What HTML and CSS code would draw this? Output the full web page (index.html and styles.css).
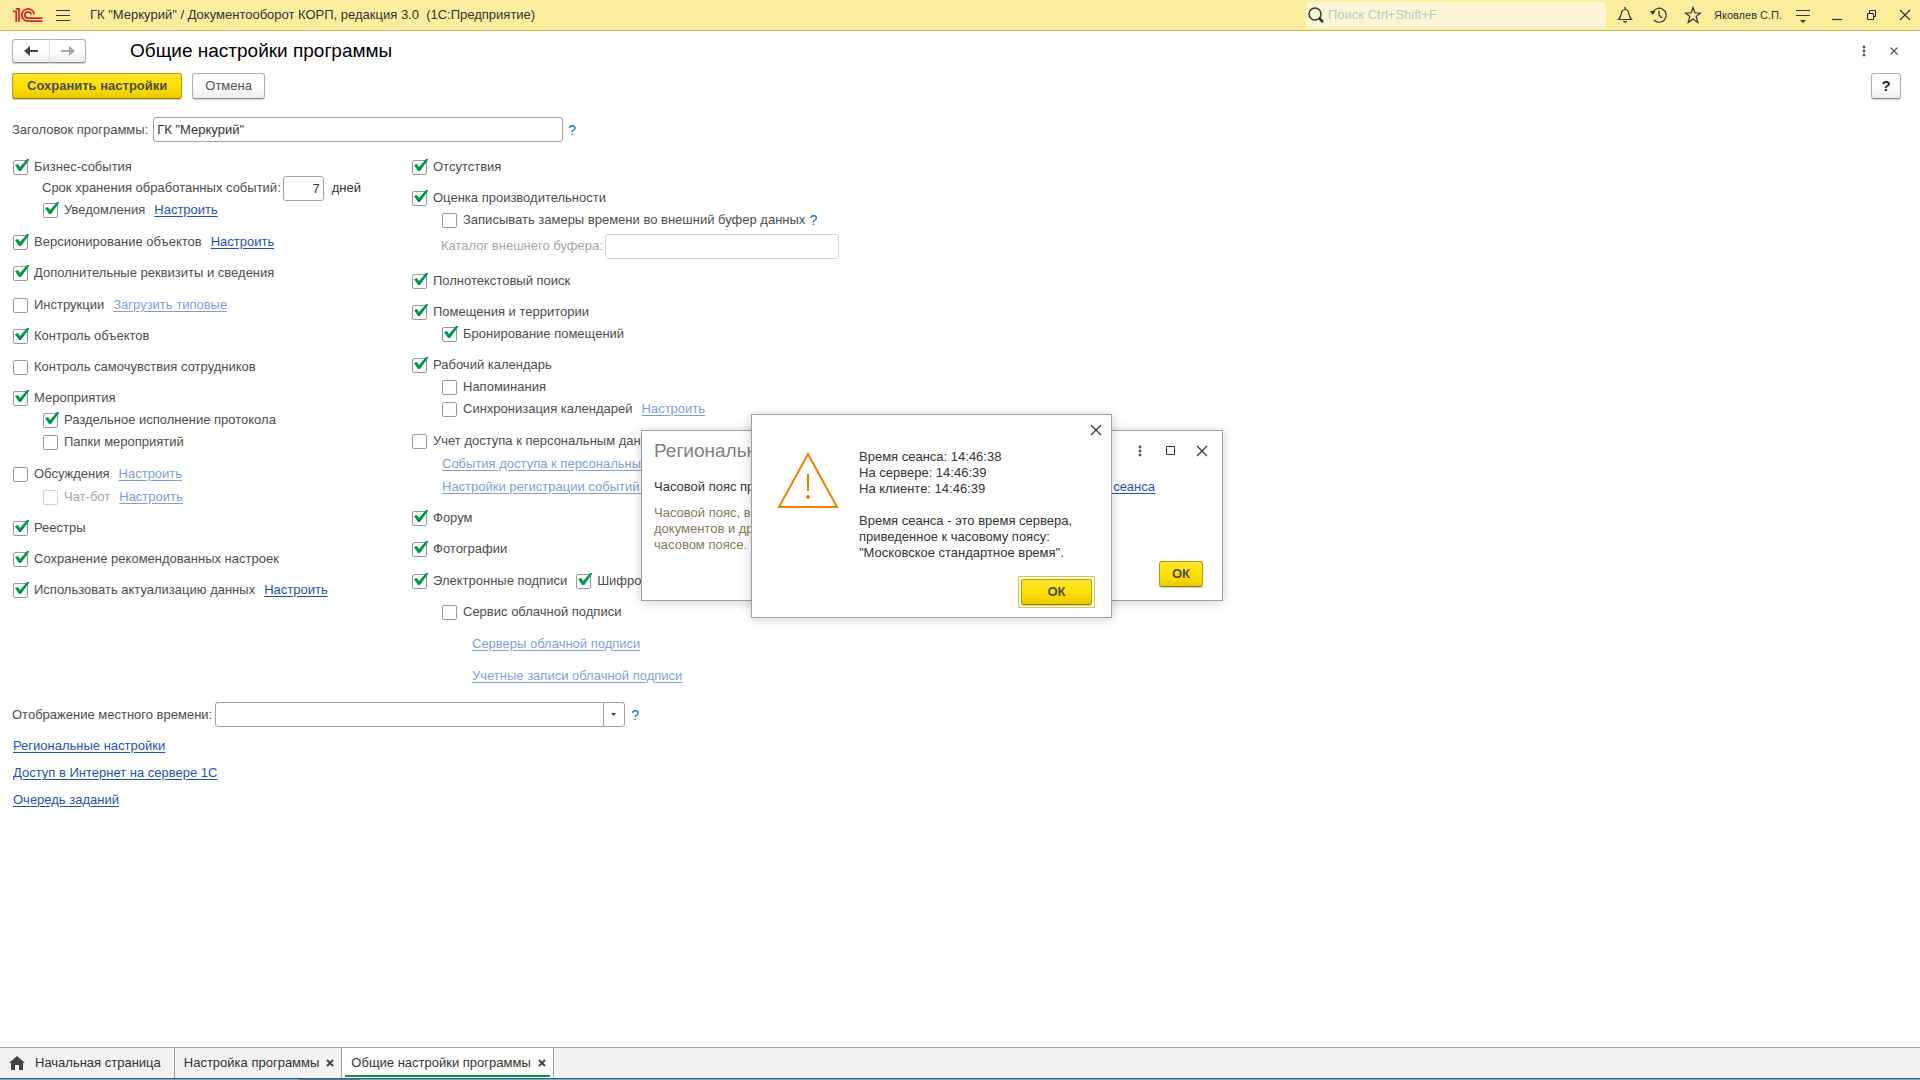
FILE: index.html
```html
<!DOCTYPE html>
<html lang="ru">
<head>
<meta charset="utf-8">
<title>Общие настройки программы</title>
<link rel="stylesheet" href="styles.css">
</head>
<body>
<header class="topbar">
  <svg class="logo" viewBox="0 0 30 18" width="30" height="18" fill="none" stroke="#d6232a" stroke-width="1.700"><path d="M0 5.300h3.200V16M2.800 2.800H6V16"/><path d="M21.200 8.500A6.200 6.200 0 1 0 15 15.200h14.500"/><path d="M18.200 8.500A3.200 3.200 0 1 0 15 12.200h14.500"/></svg>
  <button class="icon-btn menu-btn" aria-label="Меню"><svg width="16" height="14" viewBox="0 0 16 14" stroke="#333" fill="none"><path d="M1 2.500h14M1 7.500h14M1 12.500h14"/></svg></button>
  <span class="app-title">ГК "Меркурий" / Документооборот КОРП, редакция 3.0&nbsp; (1С:Предприятие)</span>
  <label class="search"><svg width="18" height="18" viewBox="0 0 18 18" fill="none" stroke="#333"><circle cx="8" cy="8" r="6" stroke-width="1.400"/><path d="M12 12l4 4" stroke-width="2.500"/></svg><input type="search" aria-label="Поиск" placeholder="Поиск Ctrl+Shift+F"></label>
  <nav class="tools">
    <button class="icon-btn" aria-label="Уведомления"><svg width="18" height="18" viewBox="0 0 18 18" fill="none" stroke="#333" stroke-width="1.200"><path d="M2.500 13.500c2-2 2.500-3.500 3-7 .3-2 1.500-3 3.500-3s3.200 1 3.500 3c.5 3.500 1 5 3 7zM9 3.500V1"/><path d="M6.500 15h5L9 17z" fill="#333" stroke="none"/></svg></button>
    <button class="icon-btn" aria-label="История"><svg width="18" height="18" viewBox="0 0 18 18" fill="none" stroke="#333" stroke-width="1.200"><path d="M2.500 7A7 7 0 1 1 4 14M9 4.500V9l3 3"/><path d="M0 5h5.500L2.500 9z" fill="#333" stroke="none"/></svg></button>
    <button class="icon-btn" aria-label="Избранное"><svg width="18" height="18" viewBox="0 0 18 18" fill="none" stroke="#333" stroke-width="1.200"><path d="M9 1.500l2 5.500h5.500l-4.300 3.500 1.600 6L9 13l-4.800 3.500 1.600-6L1.500 7H7z"/></svg></button>
    <a class="user" href="#">Яковлев С.П.</a>
    <button class="icon-btn" aria-label="Настройки"><svg width="18" height="18" viewBox="0 0 18 18" stroke="#333" fill="none"><path d="M2 4.500h14M2 9.500h14" stroke-width="1.200"/><path d="M6 14h6l-3 3z" fill="#333" stroke="none"/></svg></button>
    <button class="icon-btn" aria-label="Свернуть"><svg width="18" height="18" viewBox="0 0 18 18" stroke="#333" fill="none"><path d="M4 13.500h10" stroke-width="1.200"/></svg></button>
    <button class="icon-btn" aria-label="Восстановить"><svg width="18" height="18" viewBox="0 0 18 18" stroke="#222" fill="none"><path d="M5.500 7.500h6v6h-6zM7.500 7.500v-3h6v6h-2"/></svg></button>
    <button class="icon-btn" aria-label="Закрыть"><svg width="18" height="18" viewBox="0 0 18 18" stroke="#333" fill="none" stroke-width="1.200"><path d="M4 4l10 10M14 4L4 14"/></svg></button>
  </nav>
</header>

<main class="page">
  <div class="heading">
    <div class="history"><button aria-label="Назад"><svg width="16" height="12" viewBox="0 0 16 12"><path d="M1 6l6-5v4h8v2H7v4z" fill="#444"/></svg></button><button aria-label="Вперед"><svg width="16" height="12" viewBox="0 0 16 12"><path d="M15 6L9 1v4H1v2h8v4z" fill="#a5a5a5"/></svg></button></div>
    <h1>Общие настройки программы</h1>
    <button class="icon-btn" aria-label="Еще"><svg width="18" height="18" viewBox="0 0 18 18" fill="#555"><circle cx="9" cy="5" r="1.400"/><circle cx="9" cy="9" r="1.400"/><circle cx="9" cy="13" r="1.400"/></svg></button>
    <button class="icon-btn" aria-label="Закрыть форму"><svg width="18" height="18" viewBox="0 0 18 18" stroke="#555" fill="none" stroke-width="1.200"><path d="M5.500 5.500l7 7M12.500 5.500l-7 7"/></svg></button>
  </div>
  <div class="commands">
    <button class="btn primary">Сохранить настройки</button>
    <button class="btn">Отмена</button>
    <button class="btn help-btn">?</button>
  </div>
  <div class="field title-field">
    <label for="title">Заголовок программы:</label>
    <input class="text" id="title" type="text" value='ГК "Меркурий"'>
    <a class="hint" href="#">?</a>
  </div>

  <div class="columns">
    <div class="column">
      <section class="group">
        <div class="row"><label class="check"><input type="checkbox" checked>Бизнес-события</label></div>
        <div class="row term"><label for="term">Срок хранения обработанных событий:</label><input class="text days" id="term" type="text" value="7"><span class="unit">дней</span></div>
        <div class="row sub spaced"><label class="check"><input type="checkbox" checked>Уведомления</label><a href="#">Настроить</a></div>
      </section>
      <section class="group spaced"><div class="row"><label class="check"><input type="checkbox" checked>Версионирование объектов</label><a href="#">Настроить</a></div></section>
      <section class="group"><div class="row"><label class="check"><input type="checkbox" checked>Дополнительные реквизиты и сведения</label></div></section>
      <section class="group spaced"><div class="row"><label class="check"><input type="checkbox">Инструкции</label><a class="off" href="#">Загрузить типовые</a></div></section>
      <section class="group"><div class="row"><label class="check"><input type="checkbox" checked>Контроль объектов</label></div></section>
      <section class="group"><div class="row"><label class="check"><input type="checkbox">Контроль самочувствия сотрудников</label></div></section>
      <section class="group">
        <div class="row"><label class="check"><input type="checkbox" checked>Мероприятия</label></div>
        <div class="row sub"><label class="check"><input type="checkbox" checked>Раздельное исполнение протокола</label></div>
        <div class="row sub"><label class="check"><input type="checkbox">Папки мероприятий</label></div>
      </section>
      <section class="group spaced">
        <div class="row"><label class="check"><input type="checkbox">Обсуждения</label><a class="off" href="#">Настроить</a></div>
        <div class="row sub spaced"><label class="check muted"><input type="checkbox" disabled>Чат-бот</label><a class="off" href="#">Настроить</a></div>
      </section>
      <section class="group"><div class="row"><label class="check"><input type="checkbox" checked>Реестры</label></div></section>
      <section class="group"><div class="row"><label class="check"><input type="checkbox" checked>Сохранение рекомендованных настроек</label></div></section>
      <section class="group"><div class="row"><label class="check"><input type="checkbox" checked>Использовать актуализацию данных</label><a href="#">Настроить</a></div></section>
    </div>

    <div class="column">
      <section class="group"><div class="row"><label class="check"><input type="checkbox" checked>Отсутствия</label></div></section>
      <section class="group">
        <div class="row"><label class="check"><input type="checkbox" checked>Оценка производительности</label></div>
        <div class="row sub hinted"><label class="check"><input type="checkbox">Записывать замеры времени во внешний буфер данных</label><a class="hint" href="#">?</a></div>
        <div class="row catalog"><label class="muted" for="buffer">Каталог внешнего буфера:</label><input class="text" id="buffer" type="text" disabled></div>
      </section>
      <section class="group"><div class="row"><label class="check"><input type="checkbox" checked>Полнотекстовый поиск</label></div></section>
      <section class="group">
        <div class="row"><label class="check"><input type="checkbox" checked>Помещения и территории</label></div>
        <div class="row sub"><label class="check"><input type="checkbox" checked>Бронирование помещений</label></div>
      </section>
      <section class="group">
        <div class="row"><label class="check"><input type="checkbox" checked>Рабочий календарь</label></div>
        <div class="row sub"><label class="check"><input type="checkbox">Напоминания</label></div>
        <div class="row sub"><label class="check"><input type="checkbox">Синхронизация календарей</label><a class="off" href="#">Настроить</a></div>
      </section>
      <section class="group spaced">
        <div class="row"><label class="check"><input type="checkbox">Учет доступа к персональным данным</label></div>
        <div class="row sub spaced"><a class="off" href="#">События доступа к персональным данным</a></div>
        <div class="row sub spaced"><a class="off" href="#">Настройки регистрации событий доступа</a></div>
      </section>
      <section class="group"><div class="row"><label class="check"><input type="checkbox" checked>Форум</label></div></section>
      <section class="group"><div class="row"><label class="check"><input type="checkbox" checked>Фотографии</label></div></section>
      <section class="group spaced"><div class="row"><label class="check"><input type="checkbox" checked>Электронные подписи</label><label class="check"><input type="checkbox" checked>Шифрование</label></div></section>
      <section class="group"><div class="row sub"><label class="check"><input type="checkbox">Сервис облачной подписи</label></div></section>
      <section class="group spaced"><div class="row deep"><a class="off" href="#">Серверы облачной подписи</a></div></section>
      <section class="group spaced"><div class="row deep"><a class="off" href="#">Учетные записи облачной подписи</a></div></section>
    </div>
  </div>

  <div class="field zone-field">
    <label for="zone">Отображение местного времени:</label>
    <select class="text" id="zone"><option></option></select>
    <a class="hint" href="#">?</a>
  </div>
  <nav class="links">
    <a href="#">Региональные настройки</a>
    <a href="#">Доступ в Интернет на сервере 1С</a>
    <a href="#">Очередь заданий</a>
  </nav>
</main>

<nav class="tabs">
  <button class="tab home"><svg width="16" height="14" viewBox="0 0 16 14"><path d="M8 0l8 7h-2v7h-4V9H6v5H2V7H0z" fill="#444"/></svg>Начальная страница</button>
  <button class="tab">Настройка программы<svg width="8" height="8" viewBox="0 0 8 8" stroke="#444" stroke-width="2"><path d="M1 1l6 6M7 1L1 7"/></svg></button>
  <button class="tab active">Общие настройки программы<svg width="8" height="8" viewBox="0 0 8 8" stroke="#444" stroke-width="2"><path d="M1 1l6 6M7 1L1 7"/></svg></button>
</nav>
<div class="desktop-edge"></div>

<section class="window regional" role="dialog" aria-label="Региональные настройки">
  <div class="window-head">
    <h2>Региональные настройки</h2>
    <button class="icon-btn" aria-label="Еще"><svg width="18" height="18" viewBox="0 0 18 18" fill="#555"><circle cx="9" cy="5" r="1.400"/><circle cx="9" cy="9" r="1.400"/><circle cx="9" cy="13" r="1.400"/></svg></button>
    <button class="icon-btn" aria-label="Развернуть"><svg width="18" height="18" viewBox="0 0 18 18" stroke="#333" fill="none"><path d="M4.500 4.500h8v8h-8z"/></svg></button>
    <button class="icon-btn" aria-label="Закрыть"><svg width="18" height="18" viewBox="0 0 18 18" stroke="#333" fill="none" stroke-width="1.200"><path d="M4 4l10 10M14 4L4 14"/></svg></button>
  </div>
  <div class="zone-row"><span>Часовой пояс программы:</span><a href="#">Время сеанса</a></div>
  <p class="note">Часовой пояс, в котором хранятся даты<br>документов и других объектов в едином<br>часовом поясе.</p>
  <button class="btn primary">ОК</button>
</section>

<section class="window message" role="alertdialog" aria-label="Время сеанса">
  <button class="icon-btn close" aria-label="Закрыть"><svg width="18" height="18" viewBox="0 0 18 18" stroke="#333" fill="none" stroke-width="1.200"><path d="M4 4l10 10M14 4L4 14"/></svg></button>
  <div class="message-body">
    <svg width="62" height="58" viewBox="0 0 62 58" fill="none" stroke="#f08000" stroke-width="2"><path d="M31 3L60 56H2z"/><path d="M31 23v17"/><circle cx="31" cy="46" r="2" fill="#f08000" stroke="none"/></svg>
    <p>Время сеанса: 14:46:38<br>На сервере: 14:46:39<br>На клиенте: 14:46:39<br><br>Время сеанса - это время сервера,<br>приведенное к часовому поясу:<br>"Московское стандартное время".</p>
  </div>
  <div class="focus-ring"><button class="btn primary">ОК</button></div>
</section>
</body>
</html>
```
FILE: styles.css
```css
* { box-sizing: border-box; }
body {
  margin: 0;
  min-height: 100vh;
  display: flex;
  flex-direction: column;
  background: #fff;
  color: #4d4d4d;
  font: 13px/16px "Liberation Sans", Arial, sans-serif;
}
button, input, select { font: inherit; color: inherit; }
h1, h2, p { margin: 0; font-weight: normal; }
a { color: #1c55ae; text-underline-offset: 2px; white-space: nowrap; }
a.off { color: #7d9fdb; }
a.hint { color: #0072bc; text-decoration: none; font-size: 14px; }
svg { display: block; flex: none; }
.icon-btn { border: 0; padding: 0; background: none; }
.muted { color: #a6a6a6; }

/* Application bar */
.topbar {
  display: flex;
  align-items: center;
  height: 31px;
  padding: 0 6px 0 13px;
  background: #fbed9e;
  border-bottom: 1px solid #c9b95c;
  color: #333;
}
.menu-btn { margin: 0 19px 0 12px; }
.app-title { flex: 1; }
.search {
  display: flex;
  align-items: center;
  width: 300px;
  height: 26px;
  padding-left: 1px;
  border-radius: 3px;
  background: #fdf6d5;
}
.search input { flex: 1; border: 0; padding: 0 3px; background: none; outline: 0; }
.search input::placeholder { color: #c4c4c4; }
.tools { display: flex; align-items: center; gap: 16px; margin-left: 10px; }
.user { color: #333; text-decoration: none; font-size: 11px; margin: 0 -4px; }

/* Form header */
.page { flex: 1; padding: 8px 19px 0 12px; }
.heading { display: flex; align-items: center; height: 24px; gap: 12px; }
.heading h1 { flex: 1; margin-left: 32px; font-size: 19px; line-height: 24px; color: #000; }
.heading .icon-btn:last-child { margin-right: -2px; }
.history { display: flex; }
.history button, .btn {
  border: 1px solid #b0b0b0;
  border-bottom-color: #909090;
  border-radius: 3px;
  background: linear-gradient(#fff 50%, #ededed);
  box-shadow: 0 1px 1px #ccc;
}
.history button { width: 38px; height: 24px; padding: 0 10px; border-radius: 3px 0 0 3px; }
.history button + button { width: 37px; border-left-color: #ddd; border-radius: 0 3px 3px 0; margin-left: -1px; }
.commands { display: flex; gap: 10px; margin-top: 10px; }
.btn { height: 26px; padding: 0 12px; }
.primary {
  border-color: #b8a000;
  border-bottom-color: #8f7d00;
  background: linear-gradient(#ffe633, #ffe000 50%, #e8cb00);
  font-weight: bold;
  color: #4d4d4d;
}
.commands .primary { padding: 0 14px; }
.help-btn { margin-left: auto; width: 30px; padding: 0; font-size: 15px; font-weight: bold; color: #222; }

/* Fields */
.field { display: flex; align-items: center; gap: 5px; }
.title-field { margin-top: 18px; }
.zone-field { margin-top: 15px; gap: 3px; }
.text {
  height: 25px;
  padding: 0 3px;
  border: 1px solid #a0a0a0;
  border-radius: 3px;
  background: #fff;
  color: #333;
}
.text:disabled { border-color: #d5d5d5; }
.field .text { width: 410px; }
.zone-field .hint { margin-left: 3px; }
.field select {
  appearance: none;
  background:
    url("data:image/svg+xml,%3Csvg xmlns='http://www.w3.org/2000/svg' width='5' height='3'%3E%3Cpath d='M0 0h5L2.500 3z' fill='%23444'/%3E%3C/svg%3E") right 8px center no-repeat,
    linear-gradient(#a0a0a0, #a0a0a0) right 20px top / 1px 100% no-repeat,
    #fff;
}

/* Options */
.columns { display: flex; margin-top: 14px; }
.column { display: flex; flex-direction: column; gap: 9px; width: 400px; padding-left: 1px; }
.column + .column { width: 480px; padding-left: 0; }
.group { display: flex; flex-direction: column; }
.row { display: flex; align-items: center; gap: 9px; height: 22px; }
.row > a:not(.hint) { line-height: 18px; }
.spaced { margin-top: 1px; }
.sub { padding-left: 30px; }
.hinted { gap: 4px; }
.deep { padding-left: 60px; }
.term, .catalog { padding-left: 29px; gap: 2px; white-space: nowrap; }
.term { height: 20px; }
.catalog { height: 30px; }
.catalog .text { width: 234px; }
.days { width: 41px; text-align: right; }
.unit { margin-left: 6px; color: #333; }
.check { display: flex; align-items: flex-end; gap: 6px; white-space: nowrap; }
.check input {
  position: relative;
  appearance: none;
  width: 15px;
  height: 15px;
  margin: 0;
  border: 1px solid #999;
  border-radius: 2px;
  background: #fff;
}
.check input:disabled { border-color: #d0d0d0; }
.check input:checked::after {
  content: "";
  position: absolute;
  left: 1px;
  top: -3px;
  width: 15px;
  height: 14px;
  background: #00984a;
  clip-path: polygon(0 7px, 3px 6px, 5px 9px, 12px 1px, 14px 1px, 14px 2px, 6px 13px, 4px 13px);
}
.links { display: flex; flex-direction: column; align-items: flex-start; gap: 11px; margin-top: 11px; padding-left: 1px; }

/* Open windows panel */
.tabs { display: flex; height: 32px; background: #f2f2f2; border-top: 1px solid #a0a0a0; border-bottom: 1px solid #4d5357; }
.tab {
  display: flex;
  align-items: center;
  gap: 7px;
  padding: 0 7px 0 9px;
  border: 0;
  border-right: 1px solid #a0a0a0;
  background: none;
  color: #333;
}
.home { gap: 10px; padding-right: 13px; }
.active { background: linear-gradient(#00984a, #00984a) center bottom 1px / calc(100% - 6px) 2px no-repeat, #fff; }
.desktop-edge { height: 1px; background: linear-gradient(90deg, #64b4d8 299px, #4a7f99 299px 360px, #64b4d8 360px); }

/* Floating windows */
.window {
  position: absolute;
  display: flex;
  flex-direction: column;
  border: 1px solid #a0a0a0;
  background: #fff;
  box-shadow: 0 1px 10px #0003;
  color: #333;
}
.regional { left: 641px; top: 430px; width: 582px; height: 171px; padding: 8px 11px 13px 12px; }
.regional .btn { align-self: flex-end; margin: auto 8px 0 0; }
.window-head { display: flex; align-items: center; gap: 13px; }
.window-head h2 { flex: 1; font-size: 19px; line-height: 24px; color: #808080; }
.zone-row { display: flex; justify-content: space-between; margin-top: 16px; padding-right: 56px; }
.note { margin-top: 10px; color: #857a57; }
.message { left: 751px; top: 414px; width: 361px; height: 204px; padding: 6px 6px 9px 25px; }
.close { align-self: flex-end; }
.message-body { display: flex; gap: 20px; margin-top: 10px; }
.message-body svg { margin-top: 2px; }
.focus-ring { align-self: flex-end; display: flex; margin: auto 10px 0 0; padding: 2px; border: 1px solid #f5c518; }
.focus-ring .btn { width: 71px; }
```
